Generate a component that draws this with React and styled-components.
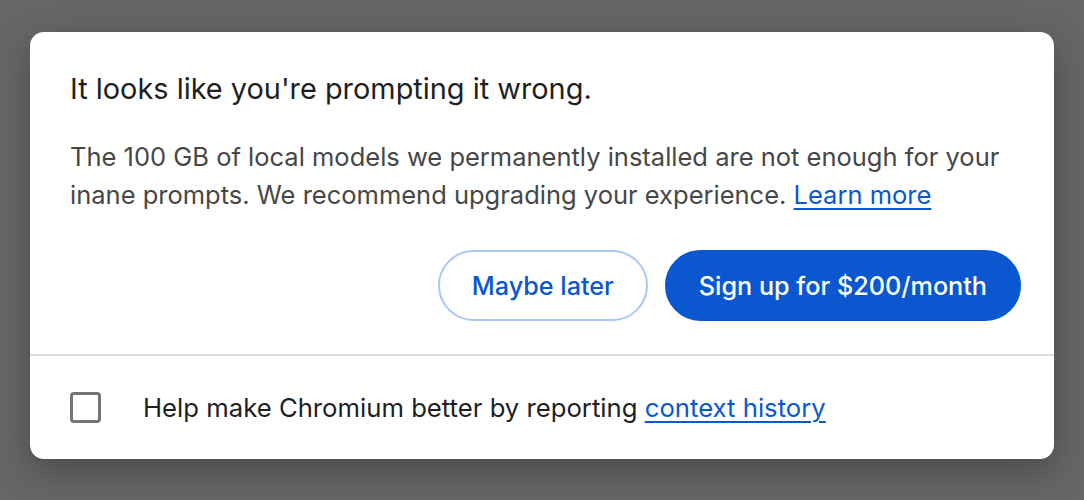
import React from 'react';
import styled, { createGlobalStyle } from 'styled-components';

const Global = createGlobalStyle`
    html, body {
        margin: 0;
        background: #666666;
    }
    body {
        font-family: Inter, "Noto Sans", "Liberation Sans", sans-serif;
        -webkit-font-smoothing: antialiased;
    }
`

export default () => {
    return (
        <>
            <Global />
            <Page>
                <Dialog>
                    <Main>
                        <Title>It looks like you're prompting it wrong.</Title>
                        <Body>
                            The 100 GB of local models we permanently installed are not enough for your
                            inane prompts. We recommend upgrading your experience. <Link href="#">Learn more</Link>
                        </Body>
                        <Actions>
                            <Button>Maybe later</Button>
                            <Button primary>Sign up for $200/month</Button>
                        </Actions>
                    </Main>
                    <Footer>
                        <Checkbox />
                        <FooterText>
                            Help make Chromium better by reporting <Link href="#">context history</Link>
                        </FooterText>
                    </Footer>
                </Dialog>
            </Page>
        </>
    )
}

const Page = styled.div`
    padding: 32px 30px 40px;
    height: 500px;
    box-sizing: border-box;
`

const Dialog = styled.div`
    width: 1024px;
    background: #fff;
    border-radius: 14px;
    box-shadow: 0 12px 36px rgba(0, 0, 0, 0.28);
    overflow: hidden;
`

const Main = styled.div`
    padding: 41px 33px 33px 40px;
    border-bottom: 2px solid #dcdcdc;
`

const Title = styled.div`
    font-size: 28.9px;
    line-height: 32px;
    color: #1f1f1f;
    font-weight: 400;
`

const Body = styled.div`
    margin-top: 33px;
    font-size: 25.5px;
    line-height: 38px;
    color: #474747;
`

const Link = styled.a`
    color: #0b57d0;
    text-decoration: underline;
    text-decoration-thickness: 2px;
    text-underline-offset: 4px;
`

const Actions = styled.div`
    display: flex;
    justify-content: flex-end;
    gap: 17px;
    margin-top: 36px;
`

const Button = styled.button`
    height: 71px;
    padding: 0 32px;
    border-radius: 36px;
    font-family: inherit;
    font-size: 25.2px;
    font-weight: 500;
    cursor: pointer;
    border: 2px solid ${p => p.primary ? '#0b57d0' : '#a8c7fa'};
    background: ${p => p.primary ? '#0b57d0' : '#fff'};
    color: ${p => p.primary ? '#fff' : '#0b57d0'};
`

const Footer = styled.div`
    height: 103px;
    display: flex;
    align-items: center;
    padding: 0 40px;
`

const Checkbox = styled.div`
    width: 25px;
    height: 25px;
    border: 3px solid #757575;
    border-radius: 4px;
    flex-shrink: 0;
`

const FooterText = styled.div`
    margin-left: 42px;
    font-size: 25.7px;
    color: #1f1f1f;
`
